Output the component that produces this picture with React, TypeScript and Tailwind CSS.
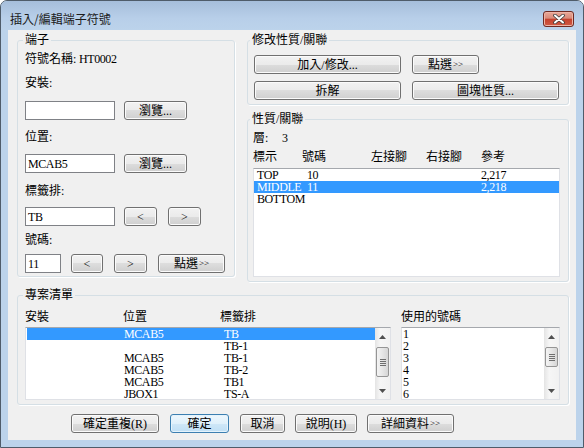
import type { ReactNode } from "react";

const mono = "font-['Liberation_Serif',serif] tracking-[-0.4px]";

function Btn({
  children,
  className = "",
  primary = false,
}: {
  children: ReactNode;
  className?: string;
  primary?: boolean;
}) {
  return (
    <button
      type="button"
      className={`h-[19px] shrink-0 rounded-[3px] border text-[12px] leading-none text-black flex items-center justify-center ${
        primary
          ? "border-[#3c7fb1] bg-[linear-gradient(#eef7fd,#dff0fb_50%,#cfe7f8_50%,#bfdff5)] shadow-[inset_0_0_0_1px_#e4f3fc]"
          : "border-[#707070] bg-[linear-gradient(#f2f2f2,#ebebeb_50%,#dddddd_50%,#cfcfcf)] shadow-[inset_0_0_0_1px_#fbfbfb]"
      } ${className}`}
    >
      {children}
    </button>
  );
}

function Arrows() {
  return <span className="text-[9px] ml-[1px]">&gt;&gt;</span>;
}

function TextBox({ value, className = "" }: { value?: string; className?: string }) {
  return (
    <div
      className={`h-[19px] shrink-0 border border-[#7f8186] bg-white pl-[2px] flex items-center text-[12px] ${className}`}
    >
      <span className={mono}>{value}</span>
    </div>
  );
}

function Group({
  title,
  className = "",
  legendClass = "-ml-[2px]",
  children,
}: {
  title: string;
  className?: string;
  legendClass?: string;
  children: ReactNode;
}) {
  return (
    <fieldset className={`border border-[#d5dfe5] rounded-[3px] shadow-[1px_1px_0_#ffffff] ${className}`}>
      <legend className={`px-[2px] text-[12px] leading-[14px] ${legendClass}`}>{title}</legend>
      {children}
    </fieldset>
  );
}

function ScrollBar({ thumb }: { thumb: string }) {
  return (
    <div className="w-[15px] h-full shrink-0 flex flex-col bg-[linear-gradient(90deg,#e4e4e4,#f6f6f6_35%,#f1f1f1)]">
      <div className="h-[17px] flex items-center justify-center">
        <svg width="7" height="4" viewBox="0 0 7 4">
          <path d="M0 4 L3.5 0 L7 4Z" fill="#505050" />
        </svg>
      </div>
      <div className="flex-1">
        <div
          className={`mt-[2px] mx-[1px] rounded-[2px] border border-[#959595] bg-[linear-gradient(90deg,#f4f4f4,#e6e6e6_50%,#d6d6d6)] flex flex-col items-center justify-center gap-[1px] ${thumb}`}
        >
          <div className="w-[6px] h-[1px] bg-[#6e6e6e]" />
          <div className="w-[6px] h-[1px] bg-[#6e6e6e]" />
          <div className="w-[6px] h-[1px] bg-[#6e6e6e]" />
          <div className="w-[6px] h-[1px] bg-[#6e6e6e]" />
        </div>
      </div>
      <div className="h-[17px] flex items-center justify-center">
        <svg width="7" height="4" viewBox="0 0 7 4">
          <path d="M0 0 L3.5 4 L7 0Z" fill="#505050" />
        </svg>
      </div>
    </div>
  );
}

const layers = [
  { tag: "TOP", num: "10", ref: "2,217", sel: false },
  { tag: "MIDDLE", num: "11", ref: "2,218", sel: true },
  { tag: "BOTTOM", num: "", ref: "", sel: false },
];

const projects = [
  { inst: "", loc: "MCAB5", strip: "TB", sel: true },
  { inst: "", loc: "", strip: "TB-1", sel: false },
  { inst: "", loc: "MCAB5", strip: "TB-1", sel: false },
  { inst: "", loc: "MCAB5", strip: "TB-2", sel: false },
  { inst: "", loc: "MCAB5", strip: "TB1", sel: false },
  { inst: "", loc: "JBOX1", strip: "TS-A", sel: false },
];

export default function App() {
  return (
    <div className="w-[584px] h-[448px] flex flex-col rounded-t-[7px] border border-[#4f5c6a] bg-[#bcd3eb] font-['Liberation_Serif','Noto_Sans_CJK_TC',serif] text-[12px] text-black overflow-hidden">
      {/* title bar */}
      <div className="h-[29px] shrink-0 flex items-center justify-between pl-[9px] pr-[9px] pt-[6px] bg-[linear-gradient(#a6bedb,#b8cfe9_60%,#bcd3eb)]">
        <span className="text-[12px] text-[#1b1b1b] font-['Noto_Sans_CJK_TC',sans-serif]">插入/編輯端子符號</span>
        <div className="w-[31px] h-[16px] rounded-[3px] border border-[#6e2a22] bg-[linear-gradient(#e9a898,#d98a79_45%,#c5412d_50%,#cf5a44)] flex items-center justify-center shadow-[inset_0_0_0_1px_#eeb4a6]">
          <svg width="12" height="10" viewBox="0 0 12 10">
            <path d="M2 1.5 L10 8.5 M10 1.5 L2 8.5" stroke="#3d3d3d" strokeWidth="3.6" strokeLinecap="round" />
            <path d="M2 1.5 L10 8.5 M10 1.5 L2 8.5" stroke="#ffffff" strokeWidth="2" strokeLinecap="round" />
          </svg>
        </div>
      </div>

      {/* client area */}
      <div className="mx-[7px] mb-[7px] flex-1 bg-[#f0f0f0] pl-[9px] pr-[7px] pt-[3px] flex flex-col">
        <div className="flex gap-[12px] items-start">
          {/* 端子 */}
          <Group title="端子" className="w-[218px] pl-[7px] pb-[3px]">
            <div className="mt-[5px] leading-[14px]">
              符號名稱:<span className={mono}> HT0002</span>
            </div>
            <div className="mt-[10px] leading-[14px]">安裝:</div>
            <div className="mt-[11px] flex">
              <TextBox className="w-[90px]" />
              <Btn className="w-[63px] ml-[9px]">瀏覽...</Btn>
            </div>
            <div className="mt-[10px] leading-[14px]">位置:</div>
            <div className="mt-[10px] flex">
              <TextBox className="w-[90px]" value="MCAB5" />
              <Btn className="w-[63px] ml-[9px]">瀏覽...</Btn>
            </div>
            <div className="mt-[11px] leading-[14px]">標籤排:</div>
            <div className="mt-[9px] flex">
              <TextBox className="w-[90px]" value="TB" />
              <Btn className="w-[33px] ml-[9px]">&lt;</Btn>
              <Btn className="w-[33px] ml-[11px]">&gt;</Btn>
            </div>
            <div className="mt-[7px] leading-[14px]">號碼:</div>
            <div className="mt-[7px] flex">
              <TextBox className="w-[36px]" value="11" />
              <Btn className="w-[32px] ml-[10px]">&lt;</Btn>
              <Btn className="w-[33px] ml-[11px]">&gt;</Btn>
              <Btn className="w-[67px] ml-[11px]">
                點選<Arrows />
              </Btn>
            </div>
          </Group>

          <div className="w-[322px] flex flex-col">
            <Group title="修改性質/關聯" className="pl-[6px] pb-[4px]" legendClass="-ml-[4px]">
              <div className="mt-[8px] flex">
                <Btn className="w-[147px]">加入/修改...</Btn>
                <Btn className="w-[67px] ml-[11px]">
                  點選<Arrows />
                </Btn>
              </div>
              <div className="mt-[7px] flex">
                <Btn className="w-[147px]">拆解</Btn>
                <Btn className="w-[147px] ml-[11px]">圖塊性質...</Btn>
              </div>
            </Group>

            <Group title="性質/關聯" className="mt-[7px] pl-[5px] pb-[4px]" legendClass="-ml-[3px]">
              <div className="mt-[5px] leading-[14px] flex">
                <span className="w-[29px]">層:</span>
                <span className={mono}>3</span>
              </div>
              <div className="mt-[5px] leading-[14px] flex">
                <span className="w-[49px]">標示</span>
                <span className="w-[69px]">號碼</span>
                <span className="w-[55px]">左接腳</span>
                <span className="w-[55px]">右接腳</span>
                <span>參考</span>
              </div>
              <div className="mt-[4px] w-[307px] h-[109px] bg-white border border-[#dfe1e6] border-t-[#a5a8ad]">
                {layers.map((r) => (
                  <div
                    key={r.tag}
                    className={`h-[12px] leading-[12px] flex pl-[3px] ${mono} text-[12px] ${
                      r.sel ? "bg-[#3399ff] text-white" : ""
                    }`}
                  >
                    <span className="w-[50px] shrink-0">{r.tag}</span>
                    <span className="w-[174px] shrink-0">{r.num}</span>
                    <span>{r.ref}</span>
                  </div>
                ))}
              </div>
            </Group>
          </div>
        </div>

        {/* 專案清單 */}
        <Group title="專案清單" className="mt-[6px] pl-[7px] pb-[4px]">
          <div className="mt-[8px] leading-[14px] flex">
            <span className="w-[98px]">安裝</span>
            <span className="w-[97px]">位置</span>
            <span className="w-[181px]">標籤排</span>
            <span>使用的號碼</span>
          </div>
          <div className="mt-[3px] flex">
            <div className="w-[366px] h-[73px] flex bg-white border border-[#dfe1e6] border-t-[#a5a8ad]">
              <div className="flex-1 pl-[1px]">
                {projects.map((r, i) => (
                  <div
                    key={i}
                    className={`h-[12px] leading-[12px] flex ${mono} text-[12px] ${
                      r.sel ? "bg-[#3399ff] text-white" : ""
                    }`}
                  >
                    <span className="w-[97px] shrink-0">{r.inst}</span>
                    <span className="w-[100px] shrink-0">{r.loc}</span>
                    <span>{r.strip}</span>
                  </div>
                ))}
              </div>
              <ScrollBar thumb="h-[30px]" />
            </div>
            <div className="ml-[10px] w-[159px] h-[73px] flex bg-white border border-[#dfe1e6] border-t-[#a5a8ad]">
              <div className="flex-1 pl-[1px]">
                {["1", "2", "3", "4", "5", "6"].map((n) => (
                  <div key={n} className={`h-[12px] leading-[12px] ${mono} text-[12px]`}>
                    {n}
                  </div>
                ))}
              </div>
              <ScrollBar thumb="h-[20px]" />
            </div>
          </div>
        </Group>

        {/* bottom buttons */}
        <div className="mt-[9px] flex pl-[54px]">
          <Btn className="w-[88px]">確定重複(R)</Btn>
          <Btn primary className="w-[59px] ml-[11px]">確定</Btn>
          <Btn className="w-[45px] ml-[11px]">取消</Btn>
          <Btn className="w-[62px] ml-[10px]">說明(H)</Btn>
          <Btn className="w-[87px] ml-[10px]">
            詳細資料<Arrows />
          </Btn>
        </div>
      </div>
    </div>
  );
}
